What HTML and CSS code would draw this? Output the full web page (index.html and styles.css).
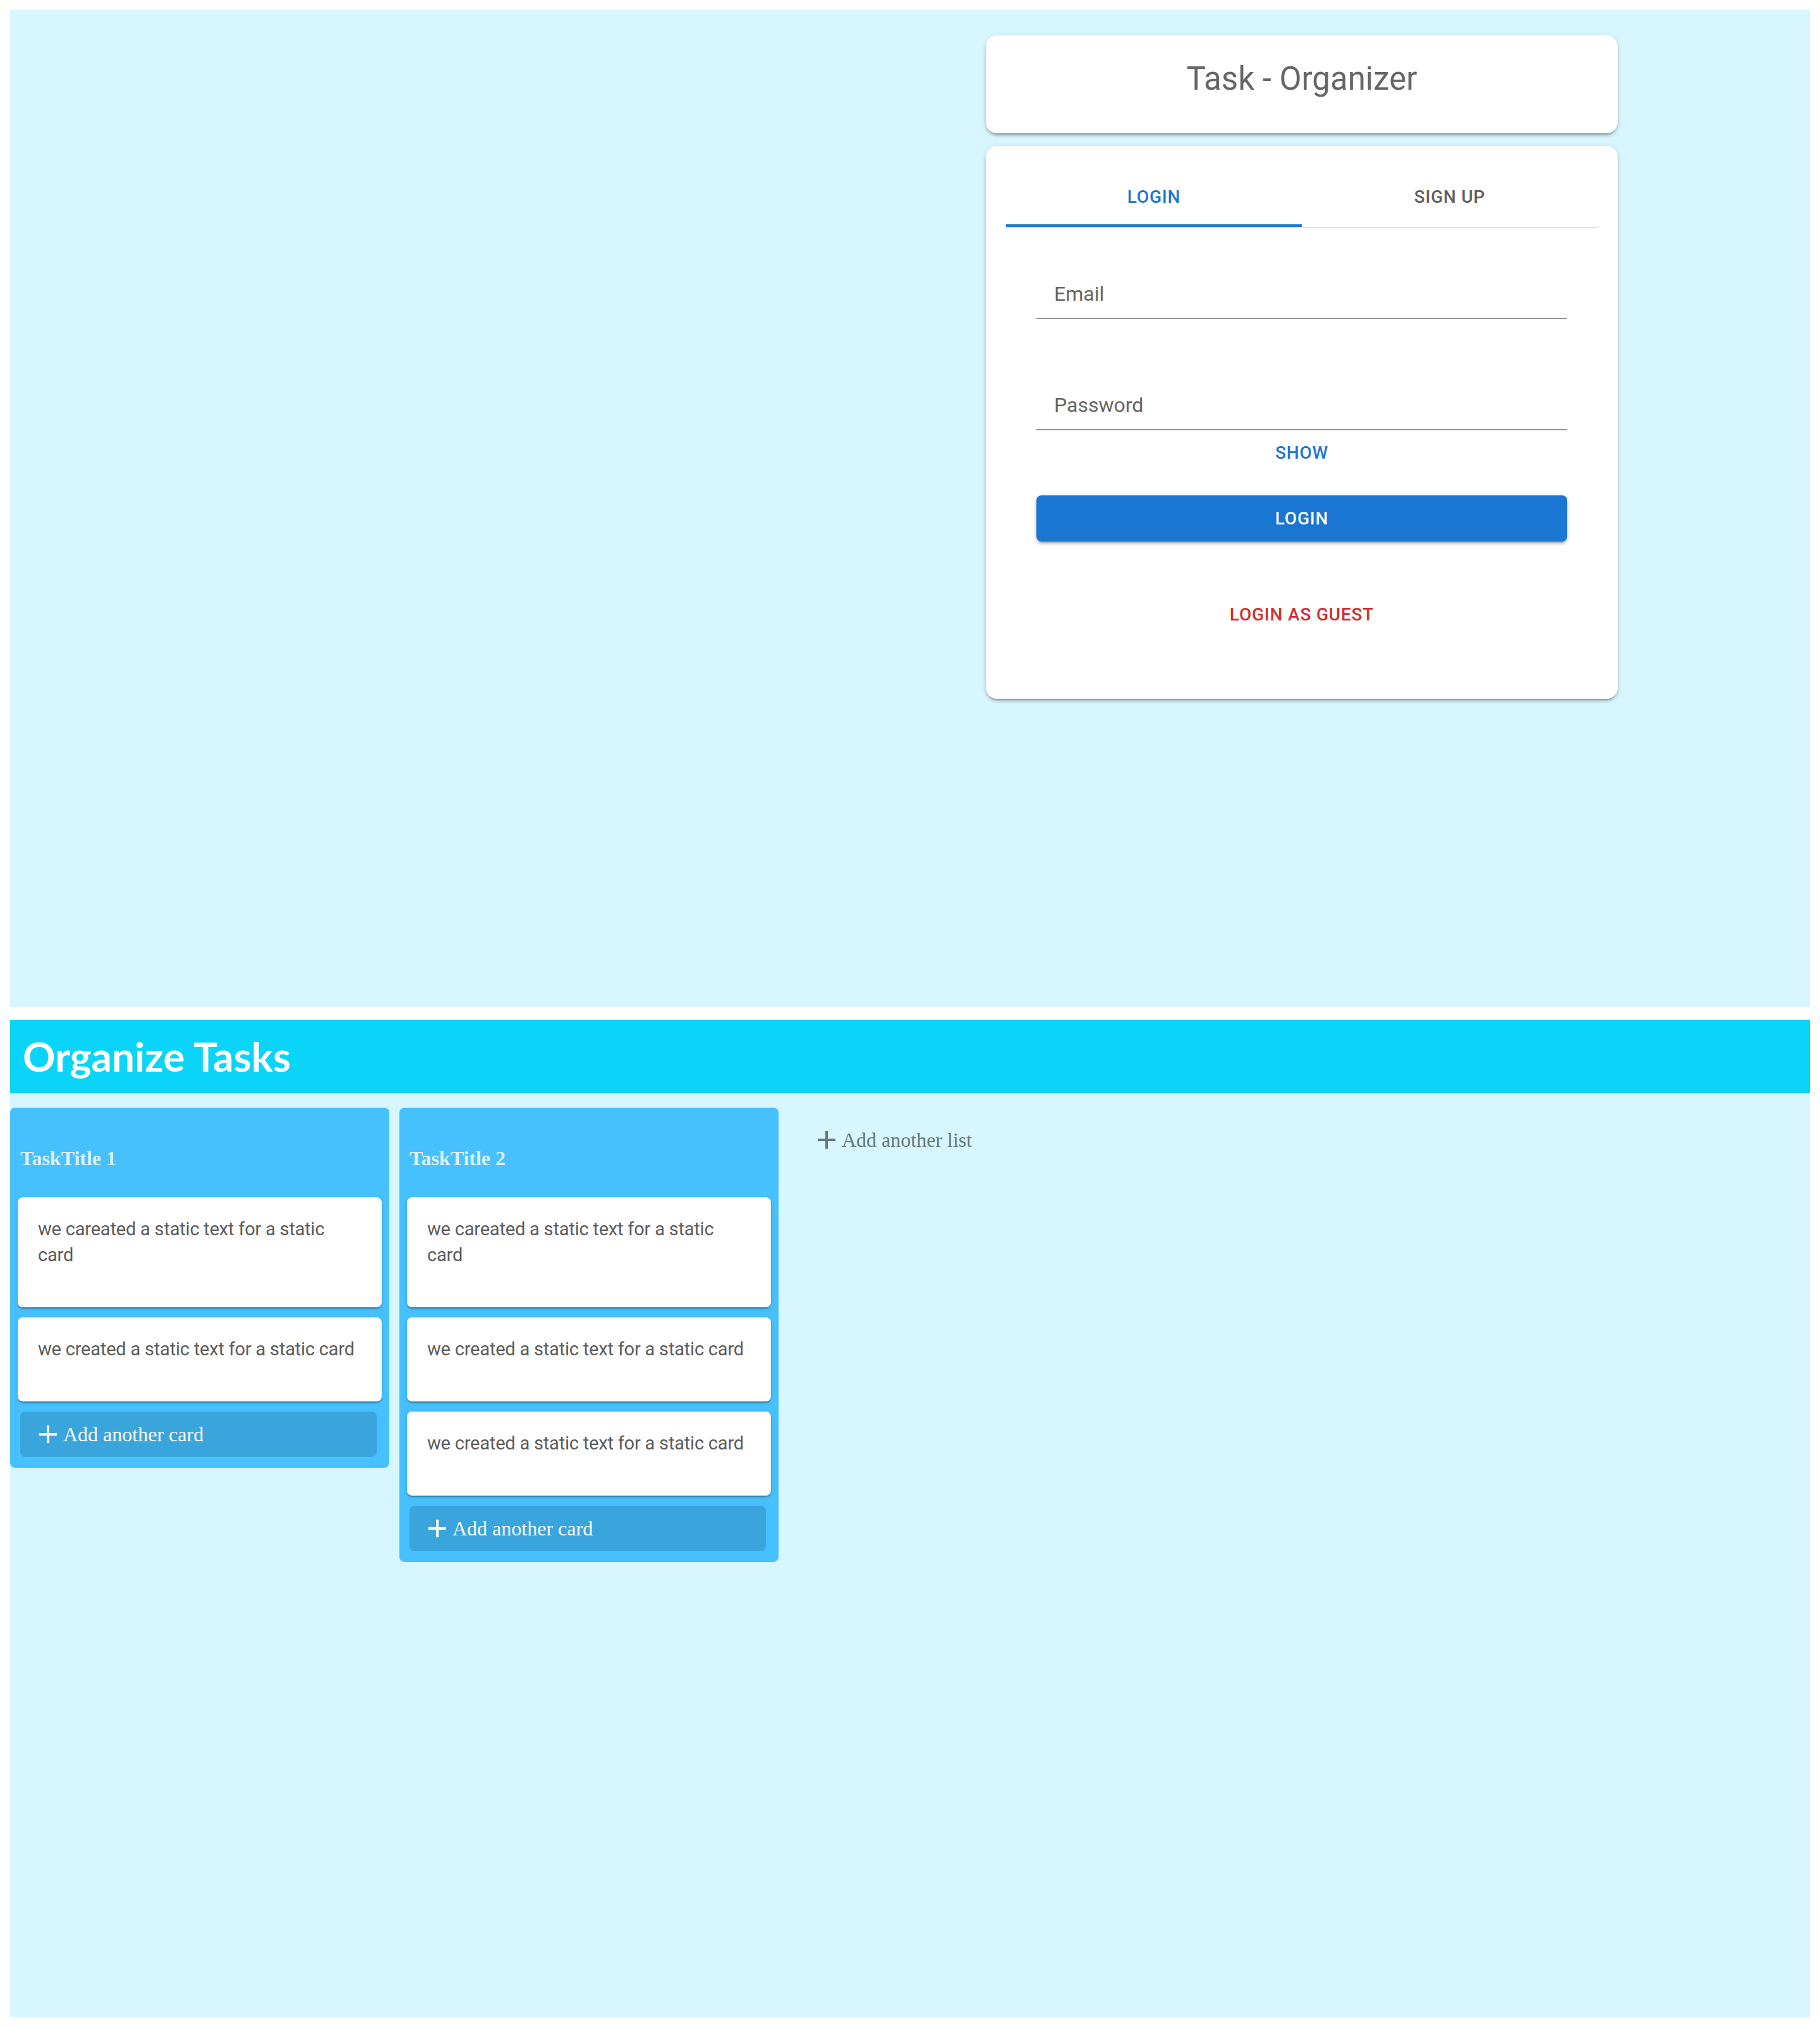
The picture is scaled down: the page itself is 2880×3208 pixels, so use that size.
FILE: index.html
```html
<!DOCTYPE html>
<html lang="en">
<head>
<meta charset="utf-8">
<title>Task Organizer</title>
<link rel="stylesheet" href="styles.css">
</head>
<body>
<div class="auth-page">
  <div class="auth-panel">
    <div class="paper title-card">
      <h2 class="app-title">Task - Organizer</h2>
    </div>
    <div class="paper form-card">
      <div class="tabs">
        <div class="tab active">Login</div>
        <div class="tab">Sign Up</div>
      </div>
      <div class="login-form">
        <div class="field">Email</div>
        <div class="field field-second">Password</div>
        <div class="text-btn show-btn">Show</div>
        <div class="primary-btn">Login</div>
        <div class="text-btn guest-btn">Login as Guest</div>
      </div>
    </div>
  </div>
</div>

<header class="board-header">
  <h1 class="board-title">Organize Tasks</h1>
</header>

<main class="board">
  <section class="list">
    <h3 class="list-title">TaskTitle 1</h3>
    <div class="cards">
      <div class="card">we careated a static text for a static card</div>
      <div class="card">we created a static text for a static card</div>
    </div>
    <div class="add-card">
      <svg class="plus" viewBox="0 0 24 24"><path d="M19 13h-6v6h-2v-6H5v-2h6V5h2v6h6v2z"/></svg>
      <span>Add another card</span>
    </div>
  </section>

  <section class="list">
    <h3 class="list-title">TaskTitle 2</h3>
    <div class="cards">
      <div class="card">we careated a static text for a static card</div>
      <div class="card">we created a static text for a static card</div>
      <div class="card">we created a static text for a static card</div>
    </div>
    <div class="add-card">
      <svg class="plus" viewBox="0 0 24 24"><path d="M19 13h-6v6h-2v-6H5v-2h6V5h2v6h6v2z"/></svg>
      <span>Add another card</span>
    </div>
  </section>

  <div class="add-list">
    <svg class="plus" viewBox="0 0 24 24"><path d="M19 13h-6v6h-2v-6H5v-2h6V5h2v6h6v2z"/></svg>
    <span>Add another list</span>
  </div>
</main>
</body>
</html>
```

FILE: styles.css
```css
html, body {
  margin: 0;
  padding: 0;
}

body {
  margin: 16px;
  background: #ffffff;
  font-family: Roboto, "Liberation Sans", sans-serif;
}

/* ---------- upper auth area ---------- */
.auth-page {
  height: 1578px;
  box-sizing: border-box;
  background: #d7f6ff;
  display: flex;
  justify-content: flex-end;
  align-items: flex-start;
  padding: 40px 304px 0 0;
}

.auth-panel {
  width: 1000px;
  display: flex;
  flex-direction: column;
  gap: 20px;
}

.paper {
  background: #ffffff;
  border-radius: 18px;
  box-shadow: 0 6px 2px -4px rgba(0, 0, 0, 0.2),
              0 4px 4px 0 rgba(0, 0, 0, 0.14),
              0 2px 10px 0 rgba(0, 0, 0, 0.12);
}

.title-card {
  padding: 39px 0 56px;
}

.app-title {
  margin: 0;
  text-align: center;
  font-family: Roboto, sans-serif;
  font-weight: 400;
  font-size: 51px;
  line-height: 60px;
  color: #666666;
}

.form-card {
  padding: 32px 32px 32px;
}

.tabs {
  display: flex;
  border-bottom: 2px solid #e0e0e0;
}

.tab {
  flex: 1;
  height: 96px;
  display: flex;
  align-items: center;
  justify-content: center;
  font-family: Roboto, sans-serif;
  font-weight: 500;
  font-size: 28px;
  letter-spacing: 0.8px;
  text-transform: uppercase;
  color: #616161;
}

.tab.active {
  color: #1976d2;
  box-shadow: inset 0 -4px 0 #1976d2;
}

.login-form {
  padding: 60px 48px 81px;
  display: flex;
  flex-direction: column;
  align-items: stretch;
}

.field {
  padding: 25px 28px 19px;
  line-height: 38px;
  font-size: 32px;
  color: #666666;
  border-bottom: 2px solid #949494;
}

.field-second {
  margin-top: 92px;
}

.text-btn {
  align-self: center;
  font-family: Roboto, sans-serif;
  font-weight: 500;
  font-size: 28px;
  line-height: 40px;
  letter-spacing: 0.8px;
  text-transform: uppercase;
}

.show-btn {
  margin-top: 16px;
  color: #1976d2;
}

.primary-btn {
  margin-top: 47px;
  padding: 12px 0;
  line-height: 49px;
  text-align: center;
  background: #1976d2;
  color: #ffffff;
  border-radius: 8px;
  font-weight: 500;
  font-size: 28px;
  letter-spacing: 0.8px;
  text-transform: uppercase;
  box-shadow: 0 6px 2px -4px rgba(0, 0, 0, 0.2),
              0 4px 4px 0 rgba(0, 0, 0, 0.14),
              0 2px 10px 0 rgba(0, 0, 0, 0.12);
}

.guest-btn {
  margin-top: 96px;
  color: #d32f2f;
}

/* ---------- board ---------- */
.board-header {
  margin-top: 20px;
  height: 116px;
  background: #0ad4f7;
  padding-left: 20px;
}

.board-title {
  margin: 0;
  font-family: Lato, "Open Sans", sans-serif;
  font-weight: 700;
  font-size: 64px;
  line-height: 116px;
  color: #ffffff;
}

.board {
  min-height: 1462px;
  box-sizing: border-box;
  background: #d7f6ff;
  padding-top: 23px;
  display: flex;
  align-items: flex-start;
  gap: 16px;
}

.list {
  width: 600px;
  box-sizing: border-box;
  background: #46c1fe;
  border-radius: 8px;
  padding: 0 12px 17px;
}

.list-title {
  margin: 0;
  padding: 62px 4px 44px;
  font-family: "Liberation Serif", serif;
  font-weight: 700;
  font-size: 32px;
  line-height: 36px;
  color: #dcf2ff;
}

.cards {
  display: flex;
  flex-direction: column;
  gap: 16px;
}

.card {
  background: #ffffff;
  border-radius: 8px;
  padding: 30px 32px 62px;
  font-family: Roboto, sans-serif;
  font-size: 29px;
  letter-spacing: -0.2px;
  line-height: 41px;
  color: #5c5c5c;
  box-shadow: 0 4px 2px -2px rgba(0, 0, 0, 0.2),
              0 2px 2px 0 rgba(0, 0, 0, 0.14),
              0 2px 6px 0 rgba(0, 0, 0, 0.12);
}

.add-card {
  margin: 16px 8px 0 4px;
  height: 72px;
  box-sizing: border-box;
  padding-left: 20px;
  background: #3aa5dc;
  border-radius: 8px;
  display: flex;
  align-items: center;
  font-family: "Liberation Serif", serif;
  font-size: 32px;
  color: #ffffff;
}

.plus {
  width: 48px;
  height: 48px;
  flex: none;
  fill: currentColor;
}

.add-list {
  margin-top: 27px;
  margin-left: 36px;
  height: 48px;
  display: flex;
  align-items: center;
  font-family: "Liberation Serif", serif;
  font-size: 32px;
  color: #66787d;
}
```
